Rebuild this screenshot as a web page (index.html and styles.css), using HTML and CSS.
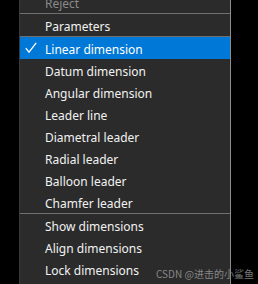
FILE: index.html
```html
<!DOCTYPE html>
<html>
<head>
<meta charset="utf-8">
<link rel="stylesheet" href="styles.css">
</head>
<body>
<div class="menu">
  <div class="item disabled">Reject</div>
  <div class="sep"></div>
  <div class="item">Parameters</div>
  <div class="sep"></div>
  <div class="item active"><svg class="check" width="12" height="12" viewBox="0 0 12 12"><polyline points="0.8,6.2 4,10.2 11.2,0.8" fill="none" stroke="#ffffff" stroke-width="1.3"/></svg>Linear dimension</div>
  <div class="item">Datum dimension</div>
  <div class="item">Angular dimension</div>
  <div class="item">Leader line</div>
  <div class="item">Diametral leader</div>
  <div class="item">Radial leader</div>
  <div class="item">Balloon leader</div>
  <div class="item">Chamfer leader</div>
  <div class="sep"></div>
  <div class="item">Show dimensions</div>
  <div class="item">Align dimensions</div>
  <div class="item">Lock dimensions</div>
</div>
<div class="watermark">CSDN @进击的小鲨鱼</div>
</body>
</html>
```
FILE: styles.css
```css
html, body {
  margin: 0;
  padding: 0;
  background: #000000;
  overflow: hidden;
}
body {
  width: 258px;
  height: 284px;
  position: relative;
  font-family: "Noto Sans", "Open Sans", sans-serif;
}
.menu {
  margin-left: 19px;
  margin-top: -9px;
  width: 210px;
  background: #2b2b2b;
  border-left: 1px solid #3a3a3a;
  border-right: 1px solid #8c8c8c;
  display: flex;
  flex-direction: column;
  height: 300px;
}
.item {
  box-sizing: border-box;
  height: 22px;
  padding-top: 2px;
  display: flex;
  align-items: center;
  padding-left: 25px;
  font-size: 12px;
  color: #f2f2f2;
  position: relative;
  white-space: nowrap;
}
.item.disabled {
  color: #8a8a8a;
}
.item.active {
  background: #0078d7;
  color: #ffffff;
}
.check {
  position: absolute;
  left: 5px;
  top: 5px;
}
.sep {
  height: 1px;
  background: #707070;
}
.watermark {
  position: absolute;
  left: 156px;
  top: 266px;
  font-size: 10px;
  color: rgba(200, 200, 200, 0.6);
  font-family: "Noto Sans CJK SC", sans-serif;
  white-space: nowrap;
}
```
